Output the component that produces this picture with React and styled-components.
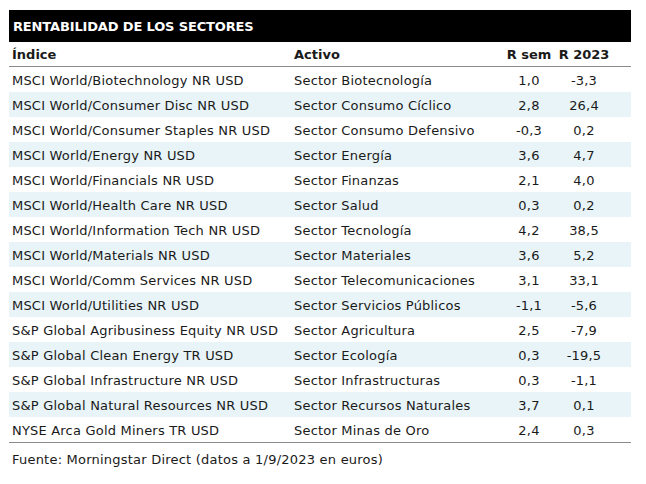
import React from "react";
import styled, { createGlobalStyle } from "styled-components";

const Global = createGlobalStyle`
  body {
    margin: 0;
    background: #fff;
    font-family: "DejaVu Sans", Verdana, sans-serif;
    color: #1a1a1a;
  }
`;

const Wrapper = styled.div`
  width: 622px;
  padding: 10px 0 0 9px;
`;

const Titulo = styled.div`
  height: 32px;
  background: #000;
  color: #fff;
  font-weight: bold;
  font-size: 13px;
  letter-spacing: -0.15px;
  display: flex;
  align-items: center;
  padding: 1px 0 0 4px;
  box-sizing: border-box;
`;

const Fila = styled.div`
  display: grid;
  grid-template-columns: 282px 209px 58px 52px 1fr;
  align-items: center;
  height: ${(p) => (p.ultima ? "26px" : "25px")};
  padding-top: ${(p) => (p.cabecera ? "0" : "1px")};
  box-sizing: border-box;
  font-size: 13px;
  letter-spacing: ${(p) => (p.cabecera ? "0" : "0.2px")};
  font-weight: ${(p) => (p.cabecera ? "bold" : "normal")};
  background: ${(p) => (p.alterna ? "#e8f4f7" : "transparent")};
  border-bottom: ${(p) => (p.cabecera || p.ultima ? "1px solid #8c8c8c" : "0")};
`;

const Celda = styled.div`
  padding-left: ${(p) => (p.num ? "0" : "3px")};
  text-align: ${(p) => (p.num ? "center" : "left")};
  white-space: nowrap;
`;

const Fuente = styled.div`
  font-size: 13px;
  letter-spacing: 0.22px;
  padding: 9px 0 0 3px;
`;

const datos = [
  ["MSCI World/Biotechnology NR USD", "Sector Biotecnología", "1,0", "-3,3"],
  ["MSCI World/Consumer Disc NR USD", "Sector Consumo Cíclico", "2,8", "26,4"],
  ["MSCI World/Consumer Staples NR USD", "Sector Consumo Defensivo", "-0,3", "0,2"],
  ["MSCI World/Energy NR USD", "Sector Energía", "3,6", "4,7"],
  ["MSCI World/Financials NR USD", "Sector Finanzas", "2,1", "4,0"],
  ["MSCI World/Health Care NR USD", "Sector Salud", "0,3", "0,2"],
  ["MSCI World/Information Tech NR USD", "Sector Tecnología", "4,2", "38,5"],
  ["MSCI World/Materials NR USD", "Sector Materiales", "3,6", "5,2"],
  ["MSCI World/Comm Services NR USD", "Sector Telecomunicaciones", "3,1", "33,1"],
  ["MSCI World/Utilities NR USD", "Sector Servicios Públicos", "-1,1", "-5,6"],
  ["S&P Global Agribusiness Equity NR USD", "Sector Agricultura", "2,5", "-7,9"],
  ["S&P Global Clean Energy TR USD", "Sector Ecología", "0,3", "-19,5"],
  ["S&P Global Infrastructure NR USD", "Sector Infrastructuras", "0,3", "-1,1"],
  ["S&P Global Natural Resources NR USD", "Sector Recursos Naturales", "3,7", "0,1"],
  ["NYSE Arca Gold Miners TR USD", "Sector Minas de Oro", "2,4", "0,3"],
];

export default function App() {
  return (
    <Wrapper>
      <Global />
      <Titulo>RENTABILIDAD DE LOS SECTORES</Titulo>
      <Fila cabecera>
        <Celda>Índice</Celda>
        <Celda>Activo</Celda>
        <Celda num>R sem</Celda>
        <Celda num>R 2023</Celda>
      </Fila>
      {datos.map((d, i) => (
        <Fila key={d[0]} alterna={i % 2 === 1} ultima={i === datos.length - 1}>
          <Celda>{d[0]}</Celda>
          <Celda>{d[1]}</Celda>
          <Celda num>{d[2]}</Celda>
          <Celda num>{d[3]}</Celda>
        </Fila>
      ))}
      <Fuente>Fuente: Morningstar Direct (datos a 1/9/2023 en euros)</Fuente>
    </Wrapper>
  );
}
